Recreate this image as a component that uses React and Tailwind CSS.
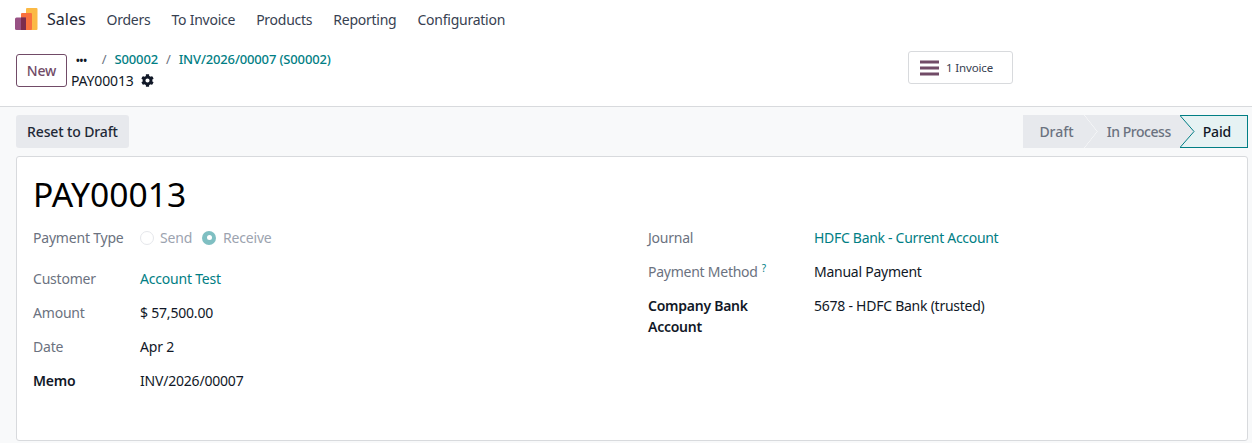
import React from 'react';
import { FaCog } from 'react-icons/fa';

const font = "font-['Noto_Sans',sans-serif]";

function NavItem({ label }) {
  return <span className="text-[14px] text-[#374151] tracking-[-0.25px]">{label}</span>;
}

function Logo() {
  return (
    <svg width="23" height="23" viewBox="0 0 23 23" className="shrink-0">
      <rect x="11" y="0" width="11.5" height="22" rx="1" fill="#fbb945" />
      <rect x="6" y="5" width="11" height="17" rx="1" fill="#f9703e" />
      <rect x="0" y="9.5" width="11" height="12.5" rx="1.5" fill="#985184" />
      <rect x="6" y="9.5" width="5" height="12.5" fill="#7d2c4d" />
    </svg>
  );
}

function StatusBar() {
  return (
    <div className="flex h-[33px] text-[14px] font-medium">
      <div className="flex items-center bg-[#e7e9ed] pl-[16px] pr-[10px] text-[#6b7280]">Draft</div>
      <svg width="14" height="33" viewBox="0 0 14 33" className="shrink-0 bg-[#e7e9ed]">
        <path d="M0 0 L13 16.5 L0 33" fill="none" stroke="#fff" strokeWidth="1" />
        <path d="M0 0 L13 16.5 L0 33Z" fill="#e7e9ed" />
      </svg>
      <div className="flex items-center bg-[#e7e9ed] pl-[9px] pr-[9px] tracking-[-0.45px] text-[#6b7280]">In Process</div>
      <svg width="15" height="33" viewBox="0 0 15 33" className="shrink-0 bg-[#e6f2f3]">
        <path d="M0 0 L14 16.5 L0 33Z" fill="#e7e9ed" />
        <path d="M0 0.5 L14 16.5 L0 32.5" fill="none" stroke="#017e84" strokeWidth="1" />
        <path d="M0 0.5 H15 M0 32.5 H15" stroke="#017e84" strokeWidth="1" />
      </svg>
      <div className="flex items-center border-y border-r border-[#017e84] bg-[#e6f2f3] pl-[8px] pr-[16px] tracking-[-0.2px] text-[#111827]">Paid</div>
    </div>
  );
}

function Field({ label, strong, children }) {
  return (
    <div className="flex text-[14px] leading-[21px] tracking-[-0.2px]">
      <div className={`w-[107px] shrink-0 ${strong ? 'font-semibold text-[#111827]' : 'text-[#6b7280]'}`}>
        {label}
      </div>
      <div className="text-[#111827]">{children}</div>
    </div>
  );
}

function RightField({ label, strong, children, help }) {
  return (
    <div className="flex text-[14px] leading-[21px] tracking-[-0.25px]">
      <div className={`w-[166px] shrink-0 pr-5 ${strong ? 'font-semibold text-[#111827]' : 'text-[#6b7280]'}`}>
        {label}
        {help && <sup className="ml-1 text-[10px] text-[#017e84]">?</sup>}
      </div>
      <div className="text-[#111827]">{children}</div>
    </div>
  );
}

export default function App() {
  return (
    <div className={`${font} flex h-[443px] w-[1252px] flex-col overflow-hidden bg-white`}>
      {/* Navbar */}
      <div className="flex h-[40px] items-center pb-[2px] pl-[15px]">
        <Logo />
        <span className="ml-[9px] text-[16px] text-[#1f2937]">Sales</span>
        <div className="ml-[21px] flex gap-[21px]">
          <NavItem label="Orders" />
          <NavItem label="To Invoice" />
          <NavItem label="Products" />
          <NavItem label="Reporting" />
          <NavItem label="Configuration" />
        </div>
      </div>

      {/* Control panel */}
      <div className="flex h-[67px] border-b border-[#d8dadd] pl-4">
        <button className="mt-[14px] h-[33px] w-[51px] rounded-[3px] border border-[#714b67] text-[14px] font-medium tracking-[-0.2px] text-[#714b67]">
          New
        </button>
        <div className="ml-[4px] mt-[9px] flex w-[837px] flex-col text-[14px] leading-[21px] tracking-[-0.15px]">
          <div className="flex h-[21px] items-center text-[13px] font-medium text-[#017e84]">
            <span className="ml-[5px] text-[10px] font-bold leading-none text-[#111827]">•••</span>
            <span className="ml-[15px] font-normal text-[#6b7280]">/</span>
            <span className="ml-[8px]">S00002</span>
            <span className="ml-[8px] font-normal text-[#6b7280]">/</span>
            <span className="ml-[8px]">INV/2026/00007 (S00002)</span>
          </div>
          <div className="flex items-center text-[#111827]">
            <span>PAY00013</span>
            <FaCog className="ml-[7px] text-[13px]" />
          </div>
        </div>
        <button className="mt-[11px] flex h-[33px] w-[105px] items-center rounded-[3px] border border-[#d8dadd] pl-[11px]">
          <svg width="20" height="16" viewBox="0 0 20 16">
            <path d="M0 2 H19 M0 8 H19 M0 14 H19" stroke="#714b67" strokeWidth="3" />
          </svg>
          <span className="ml-[6px] text-[11.5px] tracking-[-0.15px] text-[#374151]">1 Invoice</span>
        </button>
      </div>

      {/* Content */}
      <div className="flex flex-1 flex-col bg-[#f8f9fa] pb-[2px] pl-4 pr-1">
        <div className="flex h-[49px] items-start justify-between pt-2">
          <button className="h-[33px] rounded-[3px] bg-[#e7e9ed] px-[11px] text-[14px] font-medium tracking-[-0.12px] text-[#1f2937]">
            Reset to Draft
          </button>
          <StatusBar />
        </div>

        <div className="flex flex-1 flex-col rounded-[3px] border border-[#d8dadd] bg-white pl-4 pt-[14px]">
          <h1 className="text-[33.6px] leading-[46px] text-black">PAY00013</h1>

          <div className="mt-[10px] flex">
            <div className="flex w-[615px] flex-col">
              <Field label="Payment Type">
                <div className="flex items-center text-[#9ca3af]">
                  <span className="h-[14px] w-[14px] rounded-full border border-[#e5e7eb]" />
                  <span className="ml-[6px]">Send</span>
                  <span className="ml-[10px] flex h-[14px] w-[14px] items-center justify-center rounded-full bg-[#7fbfc2]">
                    <span className="h-[5px] w-[5px] rounded-full bg-white" />
                  </span>
                  <span className="ml-[7px]">Receive</span>
                </div>
              </Field>
              <div className="mt-[20px] flex flex-col gap-[13px]">
                <Field label="Customer"><span className="text-[#017e84]">Account Test</span></Field>
                <Field label="Amount">$ 57,500.00</Field>
                <Field label="Date">Apr 2</Field>
                <Field label="Memo" strong>INV/2026/00007</Field>
              </div>
            </div>
            <div className="flex flex-col gap-[13px]">
              <RightField label="Journal"><span className="tracking-[-0.3px] text-[#017e84]">HDFC Bank - Current Account</span></RightField>
              <RightField label="Payment Method" help>Manual Payment</RightField>
              <RightField label="Company Bank Account" strong>5678 - HDFC Bank (trusted)</RightField>
            </div>
          </div>
        </div>
      </div>
    </div>
  );
}
